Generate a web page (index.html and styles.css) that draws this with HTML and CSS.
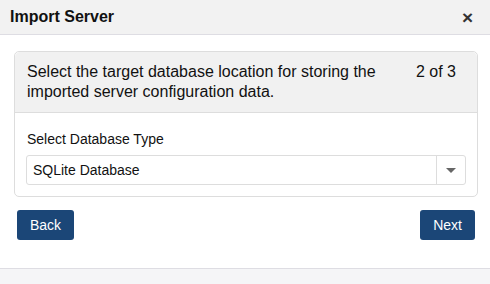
FILE: index.html
```html
<!DOCTYPE html>
<html lang="en">
<head>
    <meta charset="UTF-8">
    <meta name="viewport" content="width=device-width, initial-scale=1.0">
    <title>Import Server</title>
    <link rel="stylesheet" href="styles.css">
</head>
<body>
    <div class="modal">
        <div class="modal-header">
            <span class="modal-title">Import Server</span>
            <span class="close">&times;</span>
        </div>

        <div class="modal-body">
            <div class="panel">
                <div class="panel-heading">
                    <span class="panel-text">Select the target database location for storing the imported server configuration data.</span>
                    <span class="step">2 of 3</span>
                </div>
                <div class="panel-body">
                    <label class="field-label">Select Database Type</label>
                    <div class="select">
                        <span class="select-value">SQLite Database</span>
                        <span class="select-arrow"><span class="caret"></span></span>
                    </div>
                </div>
            </div>

            <div class="actions">
                <button class="btn" type="button">Back</button>
                <button class="btn" type="button">Next</button>
            </div>
        </div>

        <div class="modal-footer"></div>
    </div>
</body>
</html>
```

FILE: styles.css
```css
body {
    margin: 0;
    font-family: "Liberation Sans", Arial, sans-serif;
    color: #111;
    background-color: #fff;
}

.modal {
    width: 490px;
    height: 284px;
    display: flex;
    flex-direction: column;
}

.modal-header {
    height: 34px;
    padding: 0 17px 0 10px;
    display: flex;
    align-items: center;
    justify-content: space-between;
    background-color: #f2f2f2;
    border-bottom: 1px solid #dedde3;
}

.modal-title {
    font-size: 16px;
    font-weight: bold;
}

.close {
    font-size: 19px;
    font-weight: bold;
    color: #333;
    line-height: 1;
}

.modal-body {
    padding: 16px 12px 0 14px;
    flex: 1;
}

.panel {
    border: 1px solid #dddddd;
    border-radius: 5px;
}

.panel-heading {
    display: flex;
    justify-content: space-between;
    padding: 10px 21px 10px 12px;
    background-color: #f1f1f1;
    border-bottom: 1px solid #dddddd;
    border-radius: 5px 5px 0 0;
    font-size: 16px;
    line-height: 20px;
}

.panel-text {
    width: 360px;
}

.panel-body {
    padding: 16px 11px 11px 11px;
}

.field-label {
    display: block;
    font-size: 14px;
    line-height: 20px;
    margin-left: 1px;
    margin-bottom: 6px;
}

.select {
    display: flex;
    height: 28px;
    border: 1px solid #dddddd;
    border-radius: 3px;
    font-size: 14px;
}

.select-value {
    flex: 1;
    padding-left: 6px;
    line-height: 28px;
}

.select-arrow {
    width: 28px;
    border-left: 1px solid #dddddd;
    display: flex;
    align-items: center;
    justify-content: center;
}

.caret {
    width: 0;
    height: 0;
    border-left: 5px solid transparent;
    border-right: 5px solid transparent;
    border-top: 5px solid #666;
}

.actions {
    display: flex;
    justify-content: space-between;
    margin-top: 13px;
    padding: 0 3px;
}

.btn {
    height: 30px;
    padding: 0 13px;
    border: none;
    border-radius: 3px;
    background-color: #1b4677;
    color: #fff;
    font-family: "Liberation Sans", Arial, sans-serif;
    font-size: 14px;
    cursor: pointer;
}

.modal-footer {
    height: 15px;
    background-color: #f5f5f7;
    border-top: 1px solid #dedde3;
}
```
